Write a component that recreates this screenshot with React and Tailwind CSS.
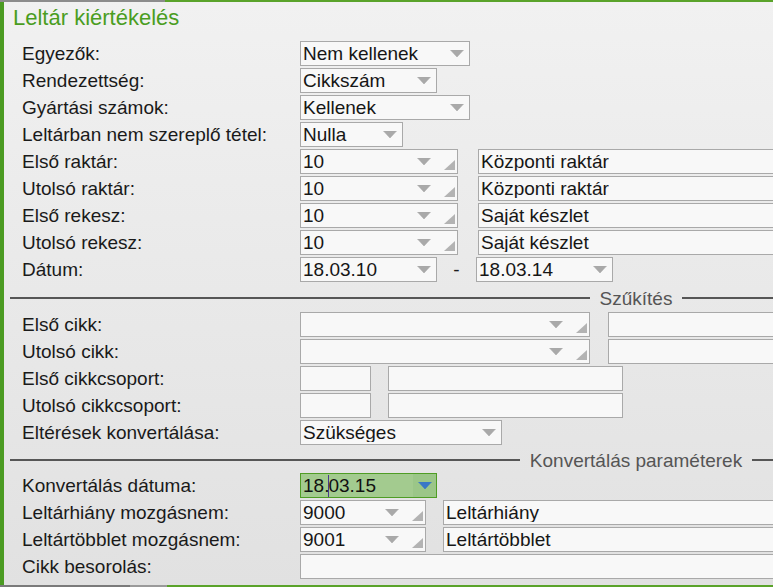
import React from 'react';

const FONT = { fontFamily: '"Liberation Sans", Arial, sans-serif' };

function Arrow({ color = '#a9a9a9' }) {
  return (
    <svg width="14" height="7" viewBox="0 0 14 7" className="shrink-0">
      <polygon points="0.5,0 13.5,0 7,7" fill={color} strokeLinejoin="round" stroke={color} strokeWidth="0.6" />
    </svg>
  );
}

function Corner() {
  return (
    <svg width="11" height="10" viewBox="0 0 11 10" className="shrink-0">
      <polygon points="11,0 11,10 0,10" fill="#b3b3b3" />
    </svg>
  );
}

function Field({ w, children, className = '' }) {
  return (
    <div className={`h-[25px] border border-[#a9a9a9] bg-[#f8f8f8] flex items-center pl-[2px] text-[19px] leading-none text-[#161616] shrink-0 ${className}`} style={{ width: w }}>
      <span className="flex-1 truncate">{children}</span>
    </div>
  );
}

function Combo({ w, value, resize, className = '' }) {
  return (
    <div className={`h-[25px] border border-[#a9a9a9] bg-[#f8f8f8] flex items-center pl-[2px] text-[19px] leading-none text-[#161616] shrink-0 ${className}`} style={{ width: w }}>
      <span className="flex-1 truncate">{value}</span>
      <Arrow />
      {resize ? (
        <div className="ml-[13px] mr-[2px] self-end mb-[3px]"><Corner /></div>
      ) : (
        <div className="w-[5px]" />
      )}
    </div>
  );
}

function Row({ label, children }) {
  return (
    <div className="flex items-center h-[25px] mb-[2px]">
      <div className="w-[278px] shrink-0 text-[19px] leading-none text-[#1a1a1a] whitespace-nowrap">{label}</div>
      {children}
    </div>
  );
}

function Divider({ title, h }) {
  return (
    <div className={`ml-[-12px] w-[1252px] flex items-center ${h}`}>
      <div className="flex-1 h-[2px] bg-[#565656]" />
      <span className="mx-[10px] text-[19px] leading-none text-[#555]">{title}</span>
      <div className="flex-1 h-[2px] bg-[#565656]" />
    </div>
  );
}

export default function App() {
  return (
    <div className="w-[773px] h-[587px] overflow-hidden relative bg-linear-to-b from-[#f1f1f1] to-[#e1e1e1]" style={FONT}>
      <div className="flex h-[2px]">
        <div className="w-[165px] bg-[#8c8c8c]" />
        <div className="flex-1 bg-[#5aa32a]" />
      </div>
      <div className="flex h-[583px]">
        <div className="w-[4px] bg-[#4b9b22] shrink-0" />
        <div className="flex-1 min-w-0">
          <div className="h-[39px] pl-[9px] pt-[5px] text-[22px] leading-none text-[#4a9d1f] whitespace-nowrap">Leltár kiértékelés</div>
          <div className="pl-[18px] w-[1268px]">
            <Row label="Egyezők:"><Combo w={170} value="Nem kellenek" /></Row>
            <Row label="Rendezettség:"><Combo w={137} value="Cikkszám" /></Row>
            <Row label="Gyártási számok:"><Combo w={170} value="Kellenek" /></Row>
            <Row label="Leltárban nem szereplő tétel:"><Combo w={103} value="Nulla" /></Row>
            <Row label="Első raktár:">
              <Combo w={158} value="10" resize />
              <Field w={420} className="ml-[20px]">Központi raktár</Field>
            </Row>
            <Row label="Utolsó raktár:">
              <Combo w={158} value="10" resize />
              <Field w={420} className="ml-[20px]">Központi raktár</Field>
            </Row>
            <Row label="Első rekesz:">
              <Combo w={158} value="10" resize />
              <Field w={420} className="ml-[20px]">Saját készlet</Field>
            </Row>
            <Row label="Utolsó rekesz:">
              <Combo w={158} value="10" resize />
              <Field w={420} className="ml-[20px]">Saját készlet</Field>
            </Row>
            <Row label="Dátum:">
              <Combo w={137} value="18.03.10" />
              <span className="w-[39px] text-center text-[19px] leading-none text-[#1d1d1d]">-</span>
              <Combo w={137} value="18.03.14" />
            </Row>

            <Divider title="Szűkítés" h="h-[28px]" />

            <Row label="Első cikk:">
              <Combo w={290} value="" resize />
              <Field w={300} className="ml-[18px]" />
            </Row>
            <Row label="Utolsó cikk:">
              <Combo w={290} value="" resize />
              <Field w={300} className="ml-[18px]" />
            </Row>
            <Row label="Első cikkcsoport:">
              <Field w={71} />
              <Field w={235} className="ml-[17px]" />
            </Row>
            <Row label="Utolsó cikkcsoport:">
              <Field w={71} />
              <Field w={235} className="ml-[17px]" />
            </Row>
            <Row label="Eltérések konvertálása:"><Combo w={202} value="Szükséges" /></Row>

            <Divider title="Konvertálás paraméterek" h="h-[26px]" />

            <Row label="Konvertálás dátuma:">
              <div className="w-[137px] h-[25px] border border-[#4f9d25] bg-[#a3cb8f] flex items-center text-[19px] leading-none text-[#111] shrink-0">
                <span className="flex-1 flex items-center pl-[2px]">
                  18.<span className="inline-block w-[1px] h-[22px] bg-[#4a3c8c] -mx-[1px]" />03.15
                </span>
                <div className="w-[23px] h-full bg-[#9bc688] flex items-center justify-center">
                  <Arrow color="#3a78c6" />
                </div>
              </div>
            </Row>
            <Row label="Leltárhiány mozgásnem:">
              <Combo w={126} value="9000" resize />
              <Field w={420} className="ml-[17px]">Leltárhiány</Field>
            </Row>
            <Row label="Leltártöbblet mozgásnem:">
              <Combo w={126} value="9001" resize />
              <Field w={420} className="ml-[17px]">Leltártöbblet</Field>
            </Row>
            <Row label="Cikk besorolás:"><Field w={560} /></Row>
          </div>
        </div>
      </div>
      <div className="flex h-[2px]">
        <div className="w-[130px] bg-[#7a7a7a]" />
        <div className="w-[37px] bg-[#9a9a9a]" />
        <div className="flex-1 bg-[#5aa32a]" />
      </div>
    </div>
  );
}
